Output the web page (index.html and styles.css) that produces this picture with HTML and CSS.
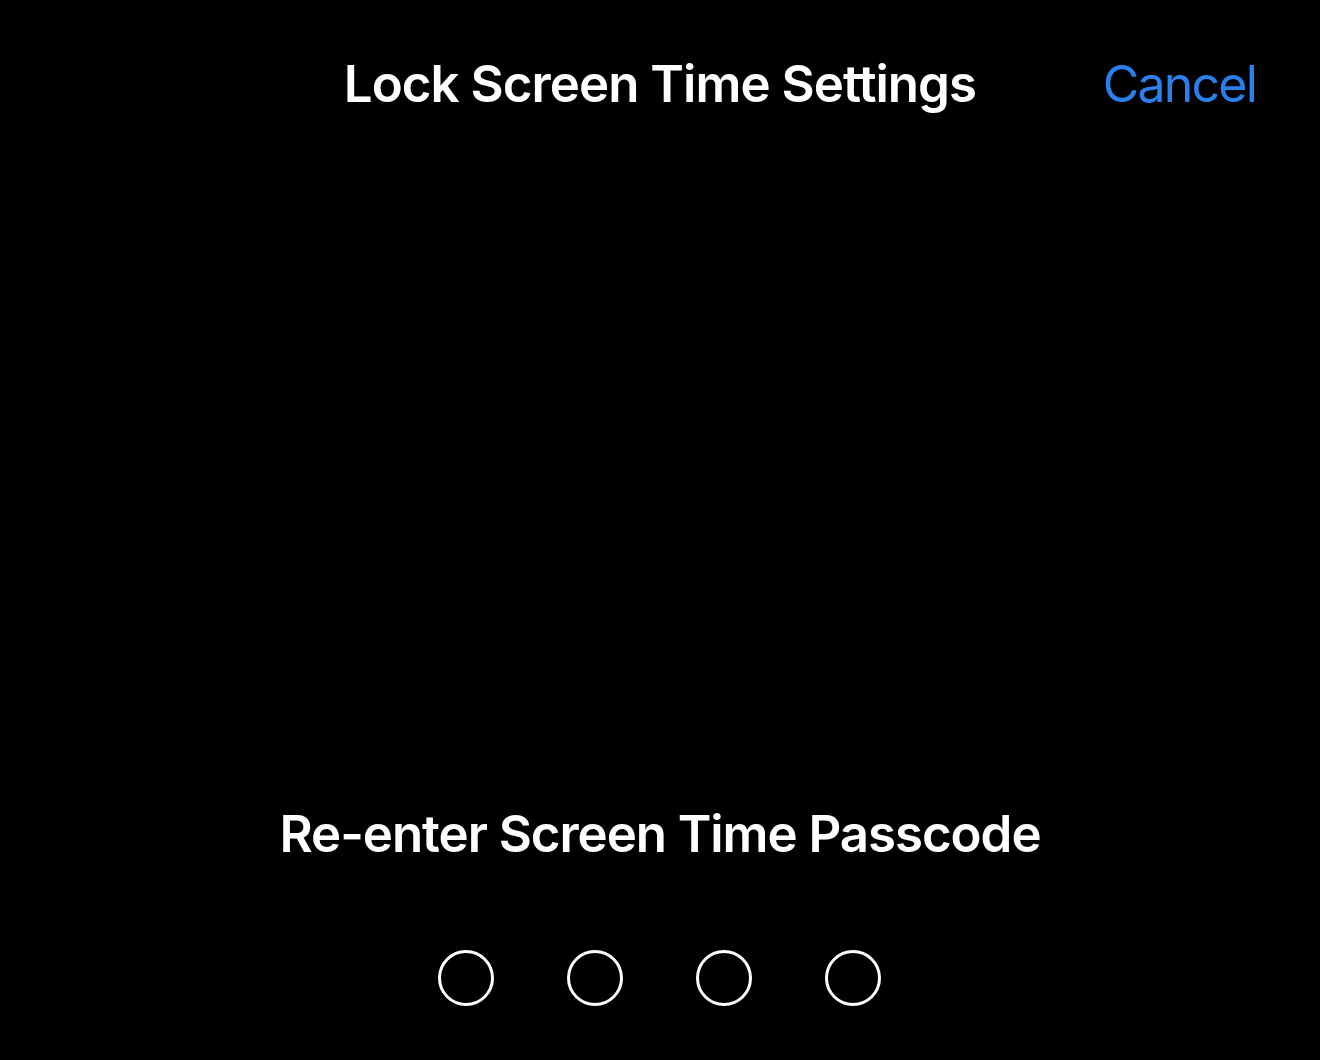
FILE: index.html
```html
<!DOCTYPE html>
<html lang="en">
<head>
<meta charset="utf-8">
<title>Lock Screen Time Settings</title>
<link rel="stylesheet" href="styles.css">
</head>
<body>
<div class="screen">
  <header class="nav">
    <div class="nav-side"></div>
    <h1 class="nav-title">Lock Screen Time Settings</h1>
    <div class="nav-side nav-right"><span class="nav-action">Cancel</span></div>
  </header>
  <main class="passcode">
    <p class="prompt">Re-enter Screen Time Passcode</p>
    <div class="dots">
      <span class="dot"></span>
      <span class="dot"></span>
      <span class="dot"></span>
      <span class="dot"></span>
    </div>
  </main>
</div>
</body>
</html>
```
FILE: styles.css
```css
html, body {
  margin: 0;
  padding: 0;
  background: #000;
}
body {
  font-family: Inter, "Liberation Sans", sans-serif;
  font-variant-ligatures: none;
  font-feature-settings: "liga" 0, "calt" 0;
  color: #fff;
}
.screen {
  height: 1060px;
  display: flex;
  flex-direction: column;
  overflow: hidden;
}
.nav {
  display: grid;
  grid-template-columns: 1fr auto 1fr;
  align-items: center;
  padding-top: 54px;
  height: 60px;
}
.nav-title {
  margin: 0;
  font-size: 51px;
  font-weight: 600;
  line-height: 60px;
  letter-spacing: -0.95px;
  white-space: nowrap;
}
.nav-right {
  display: flex;
  justify-content: flex-end;
  padding-right: 64px;
}
.nav-action {
  font-size: 50px;
  font-weight: 400;
  line-height: 60px;
  letter-spacing: -1.8px;
  color: #2a80ea;
}
.passcode {
  flex: 1;
  display: flex;
  flex-direction: column;
  align-items: center;
  justify-content: flex-end;
  padding-bottom: 54px;
}
.prompt {
  margin: 0;
  font-size: 51px;
  font-weight: 600;
  line-height: 60px;
  letter-spacing: -1.05px;
  white-space: nowrap;
}
.dots {
  display: flex;
  gap: 73px;
  margin-top: 86px;
  padding-right: 2px;
}
.dot {
  width: 56px;
  height: 56px;
  box-sizing: border-box;
  border: 3px solid #fff;
  border-radius: 50%;
}
```
